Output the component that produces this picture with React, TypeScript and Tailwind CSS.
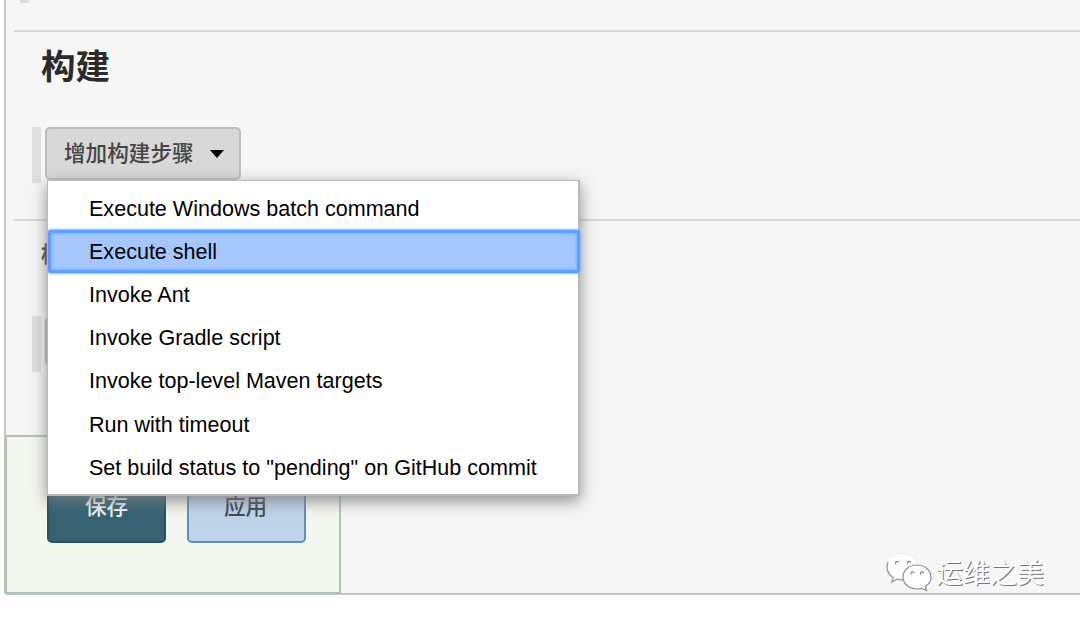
import React from "react";

const steps = [
  "Execute Windows batch command",
  "Execute shell",
  "Invoke Ant",
  "Invoke Gradle script",
  "Invoke top-level Maven targets",
  "Run with timeout",
  'Set build status to "pending" on GitHub commit',
];

const StepMenu = () => {
  return (
    <ul className="absolute top-[53px] left-[2px] z-20 h-[316px] w-[533px] border-[1.5px] border-r-2 border-b-2 border-[#b9b9b9] bg-white pt-[5.7px] font-['Liberation_Sans',sans-serif] text-[21.55px] text-black shadow-[0_5px_15px_rgba(125,125,125,0.85)]">
      {steps.map((step) => (
        <li
          key={step}
          className={
            step === "Execute shell"
              ? "-mr-[2px] flex h-[43.2px] items-center rounded-[3px] bg-[#a5c7fe] pt-px pl-[41px] shadow-[inset_0_0_0_3px_#619ffc,inset_0_0_3px_4px_#7fb0fd,0_0_2px_1px_#8bb8fd]"
              : "flex h-[43.2px] items-center pt-px pl-[41px]"
          }
        >
          {step}
        </li>
      ))}
    </ul>
  );
};

const Watermark = () => {
  return (
    <div className="absolute top-[549px] left-[885px] flex items-center">
      <svg width="48" height="44" viewBox="0 0 48 44" fill="#fff">
        <path
          d="M17.500 4.500C9 4.500 2 10.500 2 18c0 4.500 2.200 8 6 10.500l-1 4.500 5-2.800c1.800.5 3.500.8 5.500.8C26 31 33 25.500 33 18S26 4.500 17.500 4.500Z"
          stroke="#ebebeb"
          strokeWidth="0.7"
        />
        <path
          d="M3 13c-2.500 5.500-.5 12 5 15.500L7 33l5-2.800c1.800.5 3.500.8 5.500.8"
          fill="none"
          stroke="#999"
          strokeWidth="1.300"
        />
        <path
          d="M32 16c-8 0-14 5.200-14 12s6 12 14 12c1.700 0 3.200-.3 4.700-.7l4.800 2.400-1.200-4.200c3.500-2.300 5.700-5.500 5.700-9.500 0-6.800-6-12-14-12Z"
          stroke="#8e8e8e"
          strokeWidth="1.200"
        />
        <path
          d="M10.500 15v-1.200a1.500 1.500 0 0 1 3 0M22.500 15v-1.200a1.500 1.500 0 0 1 3 0M26 25.500v-1.200a1.500 1.500 0 0 1 3 0M35.500 25.500v-1.200a1.500 1.500 0 0 1 3 0"
          fill="none"
          stroke="#858585"
          strokeWidth="1.200"
        />
      </svg>
      <span className="ml-[3px] pt-[2px] font-['Noto_Sans_CJK_SC',sans-serif] text-[27px] leading-10 text-white [text-shadow:1px_1px_0_#777]">
        运维之美
      </span>
    </div>
  );
};

export default function App() {
  return (
    <div className="relative h-[622px] w-full overflow-hidden bg-white pl-1 font-['Noto_Sans_CJK_SC',sans-serif]">
      <div className="flex h-[595px] flex-col rounded-bl-[4px] border-b-2 border-l-2 border-[#c4c4c4] bg-[#f6f6f6]">
        <div className="h-[30px] shrink-0 pl-[14px]">
          <div className="h-[3px] w-[9px] bg-[#dcdcdc]" />
        </div>

        <section className="ml-2 h-[189px] shrink-0 border-t-2 border-[#d6d6d6]">
          <h1 className="mt-[7px] ml-[27px] text-[34.500px] leading-[50px] font-bold text-[#2b2b2b]">
            构建
          </h1>
          <div className="mt-[38px] ml-[18px] flex h-[56px] items-start">
            <div className="h-[56px] w-[9px] bg-[#dedede]" />
            <div className="relative ml-1">
              <button className="flex h-[53px] w-[196px] items-center rounded-[5px] border-2 border-[#bdbdbd] bg-[#d8d8d8] pb-[3px] pl-[17px] text-[21.600px] font-medium text-[#444]">
                增加构建步骤
                <svg className="mt-1 ml-[16px]" width="14" height="8" viewBox="0 0 14 8">
                  <path d="M0 0h14L7 8Z" fill="#000" />
                </svg>
              </button>
              <StepMenu />
            </div>
          </div>
        </section>

        <section className="ml-2 h-[216px] shrink-0 border-t-2 border-[#d6d6d6]">
          <h2 className="mt-[16px] ml-[27px] text-[21.600px] leading-[32px] font-bold text-[#444]">
            构
          </h2>
          <div className="mt-[47px] ml-[18px] flex h-[56px] items-start">
            <div className="h-[56px] w-[9px] bg-[#dedede]" />
            <div className="mt-[1px] ml-1 h-[48px] w-[196px] rounded-[4px] border-2 border-[#bdbdbd] bg-[#d8d8d8]" />
          </div>
        </section>

        <footer className="relative -ml-px flex h-[159px] w-[336px] shrink-0 items-start gap-[21px] rounded-bl-[3px] border-2 border-[#a9c4b5] bg-[#f4f7ef] pt-[52px] pl-[40px] text-[21.600px] leading-[28px] font-medium">
          <button className="h-[54px] w-[119px] rounded-[5px] border-2 border-[#27515f] bg-[#366272] pb-[22px] text-[#f0f3f4]">
            保存
          </button>
          <button className="h-[54px] w-[119px] rounded-[5px] border-2 border-[#618dc8] bg-[#bfd3ea] pr-[2px] pb-[22px] text-[#40474f]">
            应用
          </button>
        </footer>
      </div>
      <Watermark />
    </div>
  );
}
